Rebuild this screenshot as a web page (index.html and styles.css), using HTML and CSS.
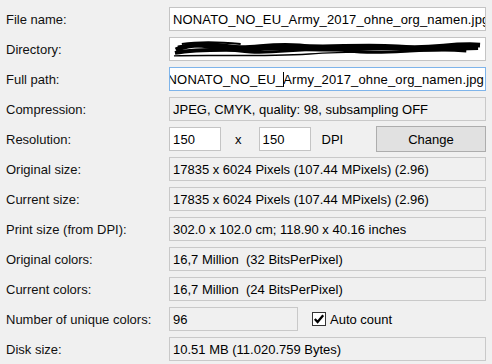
FILE: index.html
```html
<!DOCTYPE html>
<html lang="en">
<head>
    <meta charset="UTF-8">
    <title>Image Information</title>
    <link rel="stylesheet" href="styles.css">
</head>
<body>

<div class="info">
    <div class="label">File name:</div>
    <div class="field editable"><span class="text">NONATO_NO_EU_Army_2017_ohne_org_namen.jpg</span></div>

    <div class="label">Directory:</div>
    <div class="field editable">
        <svg class="scribble" width="316" height="22" viewBox="0 0 316 22">
            <path d="M4 12 C20 4 40 6 60 9 S100 5 130 8 S190 6 230 9 S280 5 314 7" stroke="#000" stroke-width="5" fill="none"/>
            <path d="M3 15 C30 10 60 13 90 11 S150 13 190 11 S260 12 312 10" stroke="#000" stroke-width="4" fill="none"/>
            <path d="M6 9 C25 5 50 12 80 14 S140 8 180 13 S250 9 300 13" stroke="#000" stroke-width="3" fill="none"/>
            <path d="M2 18 C40 17 90 19 140 16 S230 15 305 11" stroke="#000" stroke-width="1.5" fill="none"/>
            <path d="M10 6 C30 3 50 4 70 6" stroke="#000" stroke-width="2" fill="none"/>
        </svg>
    </div>

    <div class="label">Full path:</div>
    <div class="field editable focused scrolled"><span class="text">NONATO_NO_EU_<span class="caret"></span>Army_2017_ohne_org_namen.jpg</span></div>

    <div class="label">Compression:</div>
    <div class="field"><span class="text">JPEG, CMYK, quality: 98, subsampling OFF</span></div>

    <div class="label">Resolution:</div>
    <div class="resolution">
        <div class="field editable small"><span class="text">150</span></div>
        <span class="sep">x</span>
        <div class="field editable small"><span class="text">150</span></div>
        <span class="unit">DPI</span>
        <button class="button">Change</button>
    </div>

    <div class="label">Original size:</div>
    <div class="field"><span class="text">17835 x 6024 Pixels (107.44 MPixels) (2.96)</span></div>

    <div class="label">Current size:</div>
    <div class="field"><span class="text">17835 x 6024 Pixels (107.44 MPixels) (2.96)</span></div>

    <div class="label">Print size (from DPI):</div>
    <div class="field"><span class="text">302.0 x 102.0 cm; 118.90 x 40.16 inches</span></div>

    <div class="label">Original colors:</div>
    <div class="field"><span class="text">16,7 Million  (32 BitsPerPixel)</span></div>

    <div class="label">Current colors:</div>
    <div class="field"><span class="text">16,7 Million  (24 BitsPerPixel)</span></div>

    <div class="label">Number of unique colors:</div>
    <div class="unique">
        <div class="field count"><span class="text">96</span></div>
        <label class="check">
            <svg class="box" width="14" height="14" viewBox="0 0 14 14">
                <rect x="0.5" y="0.5" width="13" height="13" fill="#fff" stroke="#333"/>
                <path d="M2.8 7 L5.6 10 L11.2 3.2" stroke="#000" stroke-width="2.3" fill="none"/>
            </svg>
            Auto count
        </label>
    </div>

    <div class="label">Disk size:</div>
    <div class="field"><span class="text">10.51 MB (11.020.759 Bytes)</span></div>
</div>

</body>
</html>
```

FILE: styles.css
```css
body {
    margin: 0;
    padding: 0;
    background-color: #f0f0f0;
    font-family: "Liberation Sans", Arial, sans-serif;
    font-size: 13px;
    color: #000;
}

.info {
    display: grid;
    grid-template-columns: 163px 1fr;
    grid-auto-rows: 24px;
    row-gap: 6px;
    padding: 7px 6px 0 6px;
}

.label {
    display: flex;
    align-items: center;
    color: #111;
}

.field {
    display: flex;
    align-items: center;
    box-sizing: border-box;
    height: 24px;
    padding: 0 3px;
    border: 1px solid #c9c9c9;
    background-color: #f0f0f0;
    overflow: hidden;
    white-space: pre;
}

.field.editable {
    background-color: #fff;
    border-color: #c4c4c4;
    letter-spacing: 0.15px;
}

.field.focused {
    border-color: #7eb4ea;
}

.field.scrolled {
    justify-content: flex-end;
    padding-right: 1px;
}

.field .text {
    flex-shrink: 0;
}

.caret {
    display: inline-block;
    width: 1px;
    height: 15px;
    margin-right: -1px;
    vertical-align: -3px;
    background-color: #000;
}

.scribble {
    display: block;
    margin-left: -1px;
}

.resolution {
    display: flex;
    align-items: center;
}

.field.small {
    width: 52px;
}

.sep {
    margin: 0 17px 0 14px;
}

.unit {
    margin-left: 11px;
}

.button {
    margin-left: auto;
    width: 110px;
    height: 26px;
    border: 1px solid #adadad;
    background-color: #e1e1e1;
    font-family: inherit;
    font-size: 13px;
    color: #000;
    padding: 0;
}

.unique {
    display: flex;
    align-items: center;
}

.field.count {
    width: 129px;
}

.check {
    display: flex;
    align-items: center;
    gap: 4px;
    margin-left: 14px;
}

.box {
    display: block;
}
```
